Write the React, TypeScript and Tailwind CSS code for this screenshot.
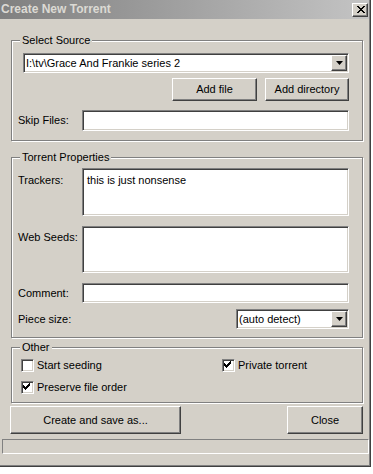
const raised =
  'border border-t-white border-l-white border-r-[#404040] border-b-[#404040] shadow-[inset_-1px_-1px_0_#808080] bg-[#d4d0c8]'
const sunken =
  'border border-t-[#808080] border-l-[#808080] border-r-white border-b-white shadow-[inset_1px_1px_0_#404040,inset_-1px_-1px_0_#d4d0c8] bg-white'

function Group({ label, className, children }: { label: string; className: string; children: React.ReactNode }) {
  return (
    <div
      className={`relative ml-[11px] w-[352px] border border-[#808080] shadow-[1px_1px_0_#fff,inset_1px_1px_0_#fff] ${className}`}
    >
      <span className="absolute left-[8px] top-[-7px] bg-[#d4d0c8] px-[2px] leading-[13px]">{label}</span>
      {children}
    </div>
  )
}

function Button({ label, className }: { label: string; className: string }) {
  return <div className={`${raised} flex items-center justify-center ${className}`}>{label}</div>
}

function DownArrow() {
  return (
    <div className={`${raised} w-[16px] h-full flex items-center justify-center`}>
      <svg width="7" height="4" viewBox="0 0 7 4">
        <polygon points="0,0 7,0 3.5,4" fill="#000" />
      </svg>
    </div>
  )
}

function Checkbox({ checked }: { checked?: boolean }) {
  const cols = [
    [2, 4],
    [3, 5],
    [4, 6],
    [5, 5],
    [6, 4],
    [7, 3],
    [8, 2],
  ]
  return (
    <div className={`${sunken} w-[13px] h-[13px] shrink-0`}>
      {checked && (
        <svg width="11" height="11" viewBox="0 0 11 11">
          {cols.map(([x, y]) => (
            <rect key={x} x={x - 1} y={y - 1} width="1" height="3" fill="#000" />
          ))}
        </svg>
      )}
    </div>
  )
}

function CloseGlyph() {
  const rows = ['xx....xx', '.xx..xx.', '..xxxx..', '...xx...', '..xxxx..', '.xx..xx.', 'xx....xx']
  return (
    <svg width="8" height="7" viewBox="0 0 8 7">
      {rows.flatMap((r, y) =>
        r.split('').map((c, x) => (c === 'x' ? <rect key={`${x}-${y}`} x={x} y={y} width="1" height="1" fill="#000" /> : null)),
      )}
    </svg>
  )
}

export default function App() {
  return (
    <div className="font-['Liberation_Sans',Arial,sans-serif] text-[11px] leading-[13px] text-black">
      <div className="w-[371px] h-[467px] bg-[#d4d0c8] border-r border-b border-[#404040] shadow-[inset_-1px_-1px_0_#808080] flex flex-col">
        {/* Title bar */}
        <div className="h-[19px] w-[369px] bg-linear-to-r from-[#808080] to-[#c4c4c4] flex items-center justify-between pl-[1px] pr-[1px]">
          <span className="text-[12px] font-bold text-[#dcdad4] leading-[19px]">Create New Torrent</span>
          <div className={`${raised} w-[16px] h-[14px] flex items-center justify-center pl-[1px]`}>
            <CloseGlyph />
          </div>
        </div>

        {/* Select Source */}
        <Group label="Select Source" className="mt-[21px] pt-[12px] pl-[6px] pr-[13px] pb-[9px]">
          <div className={`${sunken} ml-[5px] h-[20px] p-[1px] flex items-center`}>
            <span className="flex-1 pl-[1px]">I:\tv\Grace And Frankie series 2</span>
            <DownArrow />
          </div>
          <div className="mt-[5px] flex justify-end gap-[8px]">
            <Button label="Add file" className="w-[85px] h-[23px]" />
            <Button label="Add directory" className="w-[84px] h-[23px]" />
          </div>
          <div className="mt-[9px] flex items-center">
            <span className="w-[64px]">Skip Files:</span>
            <div className={`${sunken} flex-1 h-[21px]`} />
          </div>
        </Group>

        {/* Torrent Properties */}
        <Group label="Torrent Properties" className="mt-[16px] pt-[10px] pl-[6px] pr-[13px] pb-[8px]">
          <div className="flex items-start">
            <span className="w-[64px] pt-[6px]">Trackers:</span>
            <div className={`${sunken} flex-1 h-[48px] pl-[4px] pt-[5px]`}>this is just nonsense</div>
          </div>
          <div className="mt-[10px] flex items-start">
            <span className="w-[64px] pt-[5px]">Web Seeds:</span>
            <div className={`${sunken} flex-1 h-[47px]`} />
          </div>
          <div className="mt-[10px] flex items-center">
            <span className="w-[64px]">Comment:</span>
            <div className={`${sunken} flex-1 h-[20px]`} />
          </div>
          <div className="mt-[6px] flex items-center justify-between">
            <span>Piece size:</span>
            <div className={`${sunken} w-[113px] h-[20px] p-[1px] flex items-center`}>
              <span className="flex-1 pl-[1px]">(auto detect)</span>
              <DownArrow />
            </div>
          </div>
        </Group>

        {/* Other */}
        <Group label="Other" className="mt-[9px] pt-[11px] pl-[9px] pb-[8px]">
          <div className="flex h-[13px] items-center">
            <div className="w-[201px] flex items-center gap-[3px]">
              <Checkbox />
              <span>Start seeding</span>
            </div>
            <div className="flex items-center gap-[3px]">
              <Checkbox checked />
              <span>Private torrent</span>
            </div>
          </div>
          <div className="mt-[9px] flex h-[13px] items-center gap-[3px]">
            <Checkbox checked />
            <span>Preserve file order</span>
          </div>
        </Group>

        {/* Bottom buttons */}
        <div className="mt-[3px] ml-[10px] w-[353px] flex justify-between">
          <Button label="Create and save as..." className="w-[171px] h-[28px]" />
          <Button label="Close" className="w-[76px] h-[28px]" />
        </div>

        {/* Status bar */}
        <div className="mt-[5px] ml-[2px] w-[367px] h-[15px] border border-t-[#808080] border-l-[#808080] border-r-white border-b-white" />
      </div>
    </div>
  )
}
